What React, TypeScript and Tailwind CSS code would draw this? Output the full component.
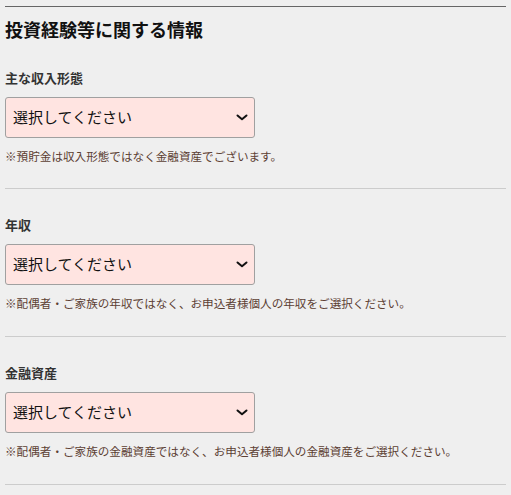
import React from "react";

const Chevron = () => (
  <svg width="12" height="7" viewBox="0 0 12 7" className="shrink-0">
    <path d="M1.5 1.5 L6 5.3 L10.5 1.5" fill="none" stroke="#111" strokeWidth="2" strokeLinecap="round" strokeLinejoin="round" />
  </svg>
);

const Field = ({ label, note, first }: { label: string; note: string; first?: boolean }) => (
  <div className={first ? "pt-[28px] pb-[24px] border-b border-[#cccccc]" : "pt-[26px] pb-[25px] border-b border-[#cccccc]"}>
    <div className="text-[13px] leading-[20px] font-bold text-[#333333]">{label}</div>
    <div className="mt-[9px] w-[250px] h-[41px] bg-[#ffe4e1] border border-[#a0a0a0] rounded-[3px] flex items-center justify-between pl-[7px] pr-[6px]">
      <span className="text-[15px] text-[#111111]">選択してください</span>
      <Chevron />
    </div>
    <div className="mt-[10px] text-[11.6px] leading-[16px] text-[#5c4033] whitespace-nowrap">{note}</div>
  </div>
);

export default function App() {
  return (
    <div
      className="w-[511px] h-[495px] bg-[#efefef] px-[5px] pt-[6px] overflow-hidden"
      style={{ fontFamily: '"Noto Sans CJK JP", "Noto Sans", sans-serif' }}
    >
      <div className="border-t border-[#666666]">
        <h2 className="mt-[11px] text-[18px] leading-[22px] font-bold text-[#111111]">投資経験等に関する情報</h2>
        <Field
          first
          label="主な収入形態"
          note="※預貯金は収入形態ではなく金融資産でございます。"
        />
        <Field
          label="年収"
          note="※配偶者・ご家族の年収ではなく、お申込者様個人の年収をご選択ください。"
        />
        <Field
          label="金融資産"
          note="※配偶者・ご家族の金融資産ではなく、お申込者様個人の金融資産をご選択ください。"
        />
      </div>
    </div>
  );
}
